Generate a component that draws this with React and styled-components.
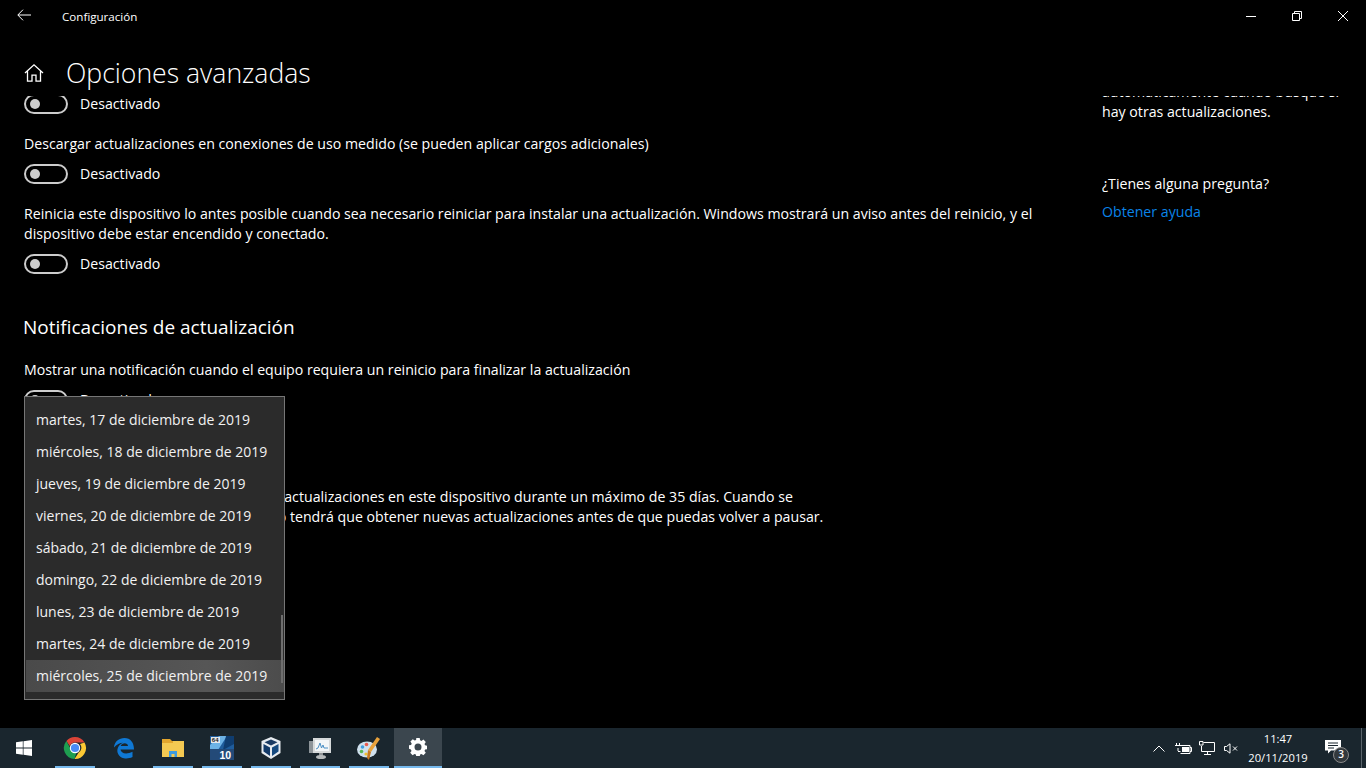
import React from 'react'
import styled, { createGlobalStyle } from 'styled-components'

const GlobalStyle = createGlobalStyle`
  html, body {
    margin: 0;
    padding: 0;
    background: #000;
  }
  body {
    font-family: "Open Sans", "Noto Sans", sans-serif;
    color: #fff;
  }
`

const dates = [
  'martes, 17 de diciembre de 2019',
  'miércoles, 18 de diciembre de 2019',
  'jueves, 19 de diciembre de 2019',
  'viernes, 20 de diciembre de 2019',
  'sábado, 21 de diciembre de 2019',
  'domingo, 22 de diciembre de 2019',
  'lunes, 23 de diciembre de 2019',
  'martes, 24 de diciembre de 2019',
  'miércoles, 25 de diciembre de 2019',
]

const Toggle = () => (
  <ToggleRow>
    <ToggleTrack><ToggleKnob /></ToggleTrack>
    <ToggleLabel>Desactivado</ToggleLabel>
  </ToggleRow>
)

const ChromeIcon = () => (
  <svg width="24" height="24" viewBox="0 0 24 24">
    <path d="M12 1a11 11 0 0 1 9.500 5.500H12a5.500 5.500 0 0 0-5.200 3.600L3.400 5A11 11 0 0 1 12 1z" fill="#db4437" />
    <path d="M21.500 6.500A11 11 0 0 1 11.500 23l4.300-6.700A5.500 5.500 0 0 0 17 8z" fill="#fcc934" />
    <path d="M3.400 5l4 7.500a5 5 0 0 0 6 4.300L11.500 23A11 11 0 0 1 3.400 5z" fill="#1e9e50" />
    <circle cx="12" cy="12" r="5.200" fill="#fff" />
    <circle cx="12" cy="12" r="4.100" fill="#4a8bf5" />
  </svg>
)

const EdgeIcon = () => (
  <svg width="22" height="22" viewBox="0 0 22 22">
    <path d="M1 10.500C1.500 4.500 6 1 11.500 1 17.500 1 21 5.500 21 12.500H7.500c.3 3.600 5.500 5.600 12 2.300v5.300c-3 1.400-5.800 1.700-8.600 1.200C5.500 20 3 15 5 10.500 6.200 8 8 6.500 10 5.800 7 5.800 3.500 7.500 1 10.500zM7.700 9h7.300c0-3.500-6-3.800-7.300 0z" fill="#0f78d4" fillRule="evenodd" />
  </svg>
)

const FolderIcon = () => (
  <svg width="22" height="22" viewBox="0 0 22 22">
    <path d="M0 2h8l2 2h12v3H0z" fill="#e2a52d" />
    <rect x="0" y="4" width="22" height="16" fill="#f4c952" />
    <rect x="0" y="4" width="11" height="2" fill="#e2a52d" />
    <path d="M7 20v-6h8v6h-2.500v-3h-3v3z" fill="#3d9be0" />
  </svg>
)

const AidaIcon = () => (
  <svg width="24" height="24" viewBox="0 0 24 24">
    <rect width="24" height="24" fill="#1f5d9c" />
    <path d="M9 0h8L8 14H0V9z" fill="#6db3e6" />
    <path d="M16 0h8v8L13 14z" fill="#0f3d70" />
    <rect x="1" y="1" width="9" height="6" fill="#e4e8ec" />
    <text x="1.800" y="6.300" fontSize="6" fontWeight="700" fontFamily="Liberation Sans" fill="#222">64</text>
    <rect x="0" y="13" width="24" height="11" fill="#234a78" />
    <text x="9.500" y="22.500" fontSize="10.500" fontWeight="700" fontFamily="Liberation Sans" fill="#fff">10</text>
  </svg>
)

const VirtualBoxIcon = () => (
  <svg width="24" height="24" viewBox="0 0 24 24">
    <path d="M12 1l9.500 4v12L12 23l-9.500-6V5z" fill="#e7ebf0" />
    <path d="M12 3.500l6.500 2.800L12 9.500 5.500 6.300z" fill="#1a3a63" />
    <path d="M4.500 8l6.500 3.500v8.500l-6.500-4.500z" fill="#123968" />
    <path d="M19.500 8L13 11.500v8.500l6.500-4.500z" fill="#15497f" />
  </svg>
)

const MonitorIcon = () => (
  <svg width="24" height="24" viewBox="0 0 24 24">
    <rect x="1" y="5" width="6" height="12" fill="#8d9499" />
    <rect x="5" y="2" width="18" height="15" fill="#d6d9da" />
    <rect x="7" y="4" width="14" height="11" fill="#f3f6f8" />
    <path d="M8 13l2-1 2-5 1.500 5 1.500-3 1 3 4 0" fill="none" stroke="#4b8fc4" strokeWidth="1" />
    <rect x="11" y="17" width="4" height="3" fill="#8f9396" />
    <ellipse cx="13" cy="21" rx="5" ry="2" fill="#b7bbbd" />
  </svg>
)

const PaintIcon = () => (
  <svg width="24" height="24" viewBox="0 0 24 24">
    <ellipse cx="10" cy="13.500" rx="10" ry="8" fill="#cfe0ee" />
    <circle cx="5.500" cy="11" r="1.800" fill="#3f9de0" />
    <circle cx="9.500" cy="8.500" r="1.800" fill="#e85a4f" />
    <circle cx="4.500" cy="15.500" r="1.800" fill="#59b653" />
    <circle cx="9" cy="18" r="1.600" fill="#f0c030" />
    <path d="M20 1l3 2-9 13-3-2z" fill="#e9a23b" />
    <path d="M11 14l3 2-2 8-2-2z" fill="#c9781f" />
  </svg>
)

const GearIcon = () => (
  <svg width="18" height="18" viewBox="0 0 18 18">
    <path
      fillRule="evenodd"
      fill="#fff"
      d="M7.300 0h3.400l.4 2.300 1.400.6 1.900-1.300 2.400 2.400-1.300 1.900.6 1.400 2.300.4v3.400l-2.300.4-.6 1.400 1.300 1.900-2.400 2.400-1.900-1.300-1.400.6-.4 2.300H7.300l-.4-2.300-1.400-.6-1.900 1.300-2.400-2.400 1.300-1.900-.6-1.400L-.2 10.700V7.300l2.300-.4.6-1.400-1.300-1.900 2.400-2.400 1.900 1.300 1.400-.6zM9 5.500a3.500 3.500 0 1 0 0 7 3.500 3.500 0 0 0 0-7z"
    />
  </svg>
)

const pinned = [
  { icon: <ChromeIcon />, running: true },
  { icon: <EdgeIcon /> },
  { icon: <FolderIcon />, running: true },
  { icon: <AidaIcon />, running: true },
  { icon: <VirtualBoxIcon />, running: true },
  { icon: <MonitorIcon />, running: true },
  { icon: <PaintIcon />, running: true },
]

export default function App() {
  return (
    <>
      <GlobalStyle />
      <Screen>
        <SettingsWindow>
          <TitleBar>
            <BackButton>
              <svg width="14" height="12" viewBox="0 0 14 12" fill="none" stroke="#fff" strokeWidth="1">
                <path d="M14 6H1M6 .7L.8 6 6 11.300" />
              </svg>
            </BackButton>
            <WindowTitle>Configuración</WindowTitle>
            <WindowControls>
              <ControlButton>
                <svg width="10" height="10" viewBox="0 0 10 10" stroke="#fff" fill="none"><path d="M0 5.500h10" /></svg>
              </ControlButton>
              <ControlButton>
                <svg width="10" height="10" viewBox="0 0 10 10" stroke="#fff" fill="none"><path d="M.5 2.500h7v7h-7zM2.500 2.500v-2h7v7h-2" /></svg>
              </ControlButton>
              <ControlButton>
                <svg width="10" height="10" viewBox="0 0 10 10" stroke="#fff" fill="none"><path d="M0 0l10 10M10 0L0 10" /></svg>
              </ControlButton>
            </WindowControls>
          </TitleBar>

          <PageHeader>
            <svg width="20" height="20" viewBox="0 0 20 20" fill="none" stroke="#fff" strokeWidth="1.300">
              <path d="M1 10L10 1.800 19 10M3.500 8v10.200h4.500v-6h4v6h4.500V8" />
            </svg>
            <PageTitle>Opciones avanzadas</PageTitle>
          </PageHeader>

          <PageBody>
            <MainColumn>
              <Scrolled>
                <Toggle />
                <SettingText>Descargar actualizaciones en conexiones de uso medido (se pueden aplicar cargos adicionales)</SettingText>
                <Toggle />
                <SettingText>
                  Reinicia este dispositivo lo antes posible cuando sea necesario reiniciar para instalar una actualización. Windows mostrará un aviso antes del reinicio, y el
                  <br />
                  dispositivo debe estar encendido y conectado.
                </SettingText>
                <Toggle />
                <SectionTitle>Notificaciones de actualización</SectionTitle>
                <SettingText>Mostrar una notificación cuando el equipo requiera un reinicio para finalizar la actualización</SettingText>
                <Toggle />
                <SectionTitle $pause>Pausar actualizaciones</SectionTitle>
                <PauseText>
                  Pausa temporalmente la instalación de actualizaciones en este dispositivo durante un máximo de 35 días. Cuando se
                  <br />
                  alcance el límite de pausa, el dispositivo tendrá que obtener nuevas actualizaciones antes de que puedas volver a pausar.
                </PauseText>
              </Scrolled>
            </MainColumn>

            <SideColumn>
              <SideScrolled>
                <SideText>automáticamente cuando busque si</SideText>
                <SideText>hay otras actualizaciones.</SideText>
                <SideQuestion>¿Tienes alguna pregunta?</SideQuestion>
                <HelpLink>Obtener ayuda</HelpLink>
              </SideScrolled>
            </SideColumn>

            <DateMenu>
              {dates.map((date, i) => (
                <DateItem key={date} $selected={i === dates.length - 1}>{date}</DateItem>
              ))}
              <MenuScrollbar />
            </DateMenu>
          </PageBody>
        </SettingsWindow>

        <Taskbar>
          <StartButton>
            <svg width="16" height="16" viewBox="0 0 16 16" fill="#fff">
              <path d="M0 2.300l6.800-1v6.300H0zM7.500 1.200L16 0v7.600H7.500zM0 8.400h6.800v6.300l-6.800-1zM7.500 8.400H16V16l-8.500-1.200z" />
            </svg>
          </StartButton>
          {pinned.map((app, i) => (
            <TaskButton key={i} $running={app.running}>{app.icon}</TaskButton>
          ))}
          <ActiveTaskButton><GearIcon /></ActiveTaskButton>

          <Tray>
            <TrayIcon>
              <svg width="12" height="7" viewBox="0 0 12 7" fill="none" stroke="#fff"><path d="M.5 6.500L6 1l5.500 5.500" /></svg>
            </TrayIcon>
            <TrayIcon>
              <svg width="17" height="11" viewBox="0 0 17 11" fill="none" stroke="#fff">
                <path d="M1.500 0v2M4.500 0v2M0 2.500h6M3 5v3M3 8.500h2.500M5.500 2.500h9.500v8H5.500M15 4.500h1.500v4H15" />
                <rect x="7" y="4" width="7" height="5" fill="#fff" stroke="none" />
              </svg>
            </TrayIcon>
            <TrayIcon>
              <svg width="16" height="14" viewBox="0 0 16 14" fill="none" stroke="#fff">
                <path d="M4.500 1.500h11v9h-13V5M8.500 10.500v3M5 13.500h7M.5.500h3.500v3.500H.5z" />
              </svg>
            </TrayIcon>
            <TrayIcon>
              <svg width="14" height="11" viewBox="0 0 14 11" fill="none" stroke="#fff">
                <path d="M.5 3.500h2L6 .8v9.400L2.500 7.500h-2zM9 3.500l4 4M13 3.500l-4 4" />
              </svg>
            </TrayIcon>
            <Clock>
              <span>11:47</span>
              <span>20/11/2019</span>
            </Clock>
            <NotifyButton>
              <svg width="16" height="14" viewBox="0 0 16 14" fill="#fff">
                <path d="M0 0h16v10.500H6l-3 3v-3H0z" />
                <path d="M3 3h10M3 5.500h10M3 8h6" stroke="#1a262e" />
              </svg>
              <NotifyBadge>3</NotifyBadge>
            </NotifyButton>
            <ShowDesktop />
          </Tray>
        </Taskbar>
      </Screen>
    </>
  )
}

const Screen = styled.div`
  width: 100%;
  height: 100vh;
  display: flex;
  flex-direction: column;
  overflow: hidden;
  background: #000;
`

const SettingsWindow = styled.div`
  flex: 1;
  min-height: 0;
  display: flex;
  flex-direction: column;
`

const TitleBar = styled.div`
  height: 32px;
  flex: none;
  display: flex;
  align-items: center;
`

const BackButton = styled.div`
  width: 48px;
  height: 32px;
  display: flex;
  align-items: center;
  padding-left: 17px;
  padding-bottom: 2px;
  box-sizing: border-box;
`

const WindowTitle = styled.div`
  margin-left: 14px;
  font-size: 11.6px;
  color: #fff;
`

const WindowControls = styled.div`
  margin-left: auto;
  display: flex;
`

const ControlButton = styled.div`
  width: 46px;
  height: 32px;
  display: flex;
  align-items: center;
  justify-content: center;
`

const PageHeader = styled.div`
  height: 64px;
  flex: none;
  display: flex;
  align-items: center;
  padding: 18px 0 0 24px;
  box-sizing: border-box;
`

const PageTitle = styled.h1`
  margin: 0 0 0 22px;
  font-size: 26.6px;
  font-weight: 300;
  line-height: 36px;
`

const PageBody = styled.div`
  flex: 1;
  min-height: 0;
  display: flex;
  position: relative;
`

const MainColumn = styled.div`
  width: 1102px;
  flex: none;
  padding-left: 24px;
  box-sizing: border-box;
  overflow: hidden;
`

const Scrolled = styled.div`
  margin-top: -2px;
`

const ToggleRow = styled.div`
  display: flex;
  align-items: center;
  height: 20px;
  margin-bottom: 20px;
`

const ToggleTrack = styled.div`
  width: 44px;
  height: 20px;
  box-sizing: border-box;
  border: 2px solid #ccc;
  border-radius: 10px;
  display: flex;
  align-items: center;
  padding-left: 4px;
`

const ToggleKnob = styled.div`
  width: 10px;
  height: 10px;
  border-radius: 50%;
  background: #ccc;
`

const ToggleLabel = styled.span`
  margin-left: 12px;
  font-size: 14.17px;
  line-height: 20px;
`

const SettingText = styled.div`
  font-size: 14.17px;
  line-height: 20px;
  margin-bottom: 10px;
`

const SectionTitle = styled.h2`
  margin: ${(p) => (p.$pause ? '30px' : '39px')} 0 19px -1px;
  font-size: 19px;
  font-weight: 400;
  line-height: 28px;
`

const PauseText = styled.div`
  font-size: 14.17px;
  line-height: 20px;
  white-space: nowrap;
`

const SideColumn = styled.div`
  flex: 1;
  overflow: hidden;
`

const SideScrolled = styled.div`
  margin-top: -14px;
  width: 240px;
`

const SideText = styled.div`
  font-size: 14.17px;
  line-height: 20px;
`

const SideQuestion = styled(SideText)`
  margin-top: 52px;
`

const HelpLink = styled(SideText)`
  margin-top: 8px;
  color: #0a84e8;
`

const DateMenu = styled.div`
  position: absolute;
  left: 24px;
  top: 300px;
  width: 261px;
  height: 304px;
  box-sizing: border-box;
  background: #2b2b2b;
  border: 1px solid #767676;
  padding: 7px 0 0;
`

const DateItem = styled.div`
  height: 32px;
  padding-left: ${(p) => (p.$selected ? '10px' : '11px')};
  margin-left: ${(p) => (p.$selected ? '1px' : '0')};
  font-size: 14px;
  line-height: 32px;
  white-space: nowrap;
  color: #f2f2f2;
  background: ${(p) => (p.$selected ? 'linear-gradient(90deg, #4a4a4a, #565656 70%, #4c4c4c)' : 'transparent')};
`

const MenuScrollbar = styled.div`
  position: absolute;
  right: 1px;
  top: 218px;
  width: 2px;
  height: 68px;
  background: #6e6e6e;
`

const Taskbar = styled.div`
  height: 40px;
  flex: none;
  display: flex;
  background: #1a262e;
`

const StartButton = styled.div`
  width: 48px;
  margin-right: 2px;
  height: 40px;
  display: flex;
  align-items: center;
  justify-content: center;
`

const TaskButton = styled.div`
  width: 49px;
  height: 40px;
  display: flex;
  align-items: center;
  justify-content: center;
  position: relative;
  &::after {
    content: '';
    display: ${(p) => (p.$running ? 'block' : 'none')};
    position: absolute;
    left: 5px;
    right: 4px;
    bottom: 0;
    height: 2px;
    background: #76b9ed;
  }
`

const ActiveTaskButton = styled.div`
  width: 48px;
  height: 40px;
  margin-left: 1px;
  display: flex;
  align-items: center;
  justify-content: center;
  background: #3b464e;
  box-sizing: border-box;
  border-bottom: 2px solid #76b9ed;
`

const Tray = styled.div`
  margin-left: auto;
  display: flex;
  align-items: center;
`

const TrayIcon = styled.div`
  width: 24px;
  height: 40px;
  display: flex;
  align-items: center;
  justify-content: center;
`

const Clock = styled.div`
  width: 70px;
  display: flex;
  flex-direction: column;
  align-items: center;
  font-size: 11.2px;
  line-height: 19px;
  color: #fff;
`

const NotifyButton = styled.div`
  width: 48px;
  height: 40px;
  box-sizing: border-box;
  padding: 0 0 2px 12px;
  display: flex;
  align-items: center;
  position: relative;
`

const NotifyBadge = styled.div`
  position: absolute;
  right: 12px;
  bottom: 5px;
  width: 16px;
  height: 16px;
  box-sizing: border-box;
  border: 1.500px solid #8a8a8a;
  border-radius: 50%;
  background: #33393d;
  font-size: 10px;
  font-weight: 600;
  line-height: 13px;
  text-align: center;
`

const ShowDesktop = styled.div`
  width: 5px;
  height: 40px;
  border-left: 1px solid #5a646b;
  box-sizing: border-box;
`
